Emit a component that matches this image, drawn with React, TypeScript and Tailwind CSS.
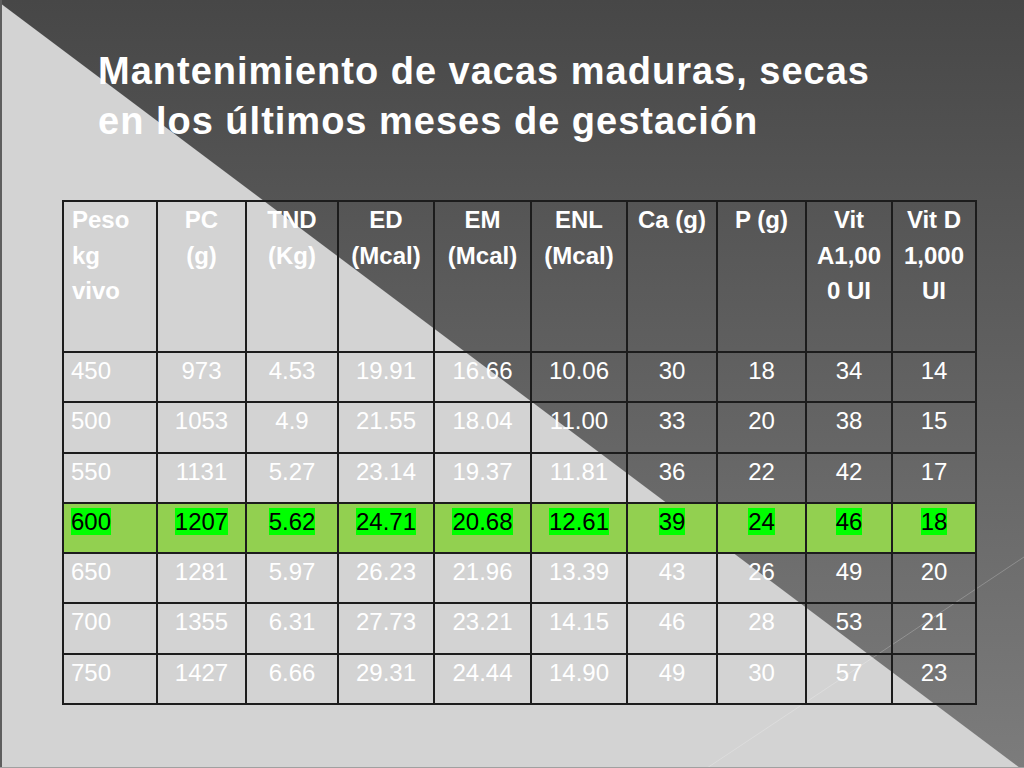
import React from 'react'

type Row = { cells: string[]; highlight?: boolean }

// ─── Data ──────────────────────────────────────────────────────────────────────

const HEADERS: React.ReactNode[] = [
  <>Peso<br />kg<br />vivo</>,
  <>PC<br />(g)</>,
  <>TND<br />(Kg)</>,
  <>ED<br />(Mcal)</>,
  <>EM<br />(Mcal)</>,
  <>ENL<br />(Mcal)</>,
  <>Ca (g)</>,
  <>P (g)</>,
  <>Vit<br />A1,00<br />0 UI</>,
  <>Vit D<br />1,000<br />UI</>,
]

const COL_WIDTHS = [94, 89, 92, 96, 97, 96, 90, 89, 86, 84]

const ROWS: Row[] = [
  { cells: ['450', '973', '4.53', '19.91', '16.66', '10.06', '30', '18', '34', '14'] },
  { cells: ['500', '1053', '4.9', '21.55', '18.04', '11.00', '33', '20', '38', '15'] },
  { cells: ['550', '1131', '5.27', '23.14', '19.37', '11.81', '36', '22', '42', '17'] },
  { cells: ['600', '1207', '5.62', '24.71', '20.68', '12.61', '39', '24', '46', '18'], highlight: true },
  { cells: ['650', '1281', '5.97', '26.23', '21.96', '13.39', '43', '26', '49', '20'] },
  { cells: ['700', '1355', '6.31', '27.73', '23.21', '14.15', '46', '28', '53', '21'] },
  { cells: ['750', '1427', '6.66', '29.31', '24.44', '14.90', '49', '30', '57', '23'] },
]

// ─── Slide ─────────────────────────────────────────────────────────────────────

export default function App() {
  return (
    <div className="relative w-[1024px] h-[768px] overflow-hidden bg-[linear-gradient(to_bottom,#474747,#7c7c7c)] font-['Liberation_Sans',Arial,sans-serif] text-white">
      {/* Background decor */}
      <div className="absolute inset-0 bg-[#d3d3d3] [clip-path:polygon(0_3px,1020px_768px,0_768px)]" />
      <svg className="absolute inset-0" width="1024" height="768">
        <line x1="707" y1="768" x2="1024" y2="557" stroke="#ffffff" strokeOpacity="0.22" strokeWidth="1" />
      </svg>
      <div className="absolute inset-y-0 left-0 w-[2px] bg-[#5e5e5e]" />
      <div className="absolute inset-x-0 bottom-0 h-[1px] bg-[#a0a0a0]" />

      <div className="relative flex flex-col">
        {/* Title */}
        <h1 className="pl-[98px] pt-[46px] text-[38px] font-bold leading-[50px] tracking-[1px]">
          Mantenimiento de vacas maduras, secas
          <br />
          en los últimos meses de gestación
        </h1>

        {/* Table */}
        <div className="pl-[62px] pt-[54px]">
          <table className="table-fixed border-collapse text-[24px] leading-[35.5px]">
            <colgroup>
              {COL_WIDTHS.map((w, i) => (
                <col key={i} style={{ width: w }} />
              ))}
            </colgroup>
            <thead>
              <tr className="h-[151px]">
                {HEADERS.map((h, i) => (
                  <th
                    key={i}
                    className={`border-2 border-[#1c1c1c] align-top font-bold pt-0 ${i === 0 ? 'text-left pl-[8px]' : 'text-center'}`}
                  >
                    {h}
                  </th>
                ))}
              </tr>
            </thead>
            <tbody>
              {ROWS.map((row, r) => (
                <tr key={r} className={`h-[50.3px] ${row.highlight ? 'bg-[#92d050] text-black' : ''}`}>
                  {row.cells.map((c, i) => (
                    <td
                      key={i}
                      className={`border-2 border-[#1c1c1c] align-top pt-0 ${i === 0 ? 'text-left pl-[7px]' : 'text-center'}`}
                    >
                      {row.highlight ? <span className="bg-[#00ff00]">{c}</span> : c}
                    </td>
                  ))}
                </tr>
              ))}
            </tbody>
          </table>
        </div>
      </div>
    </div>
  )
}
